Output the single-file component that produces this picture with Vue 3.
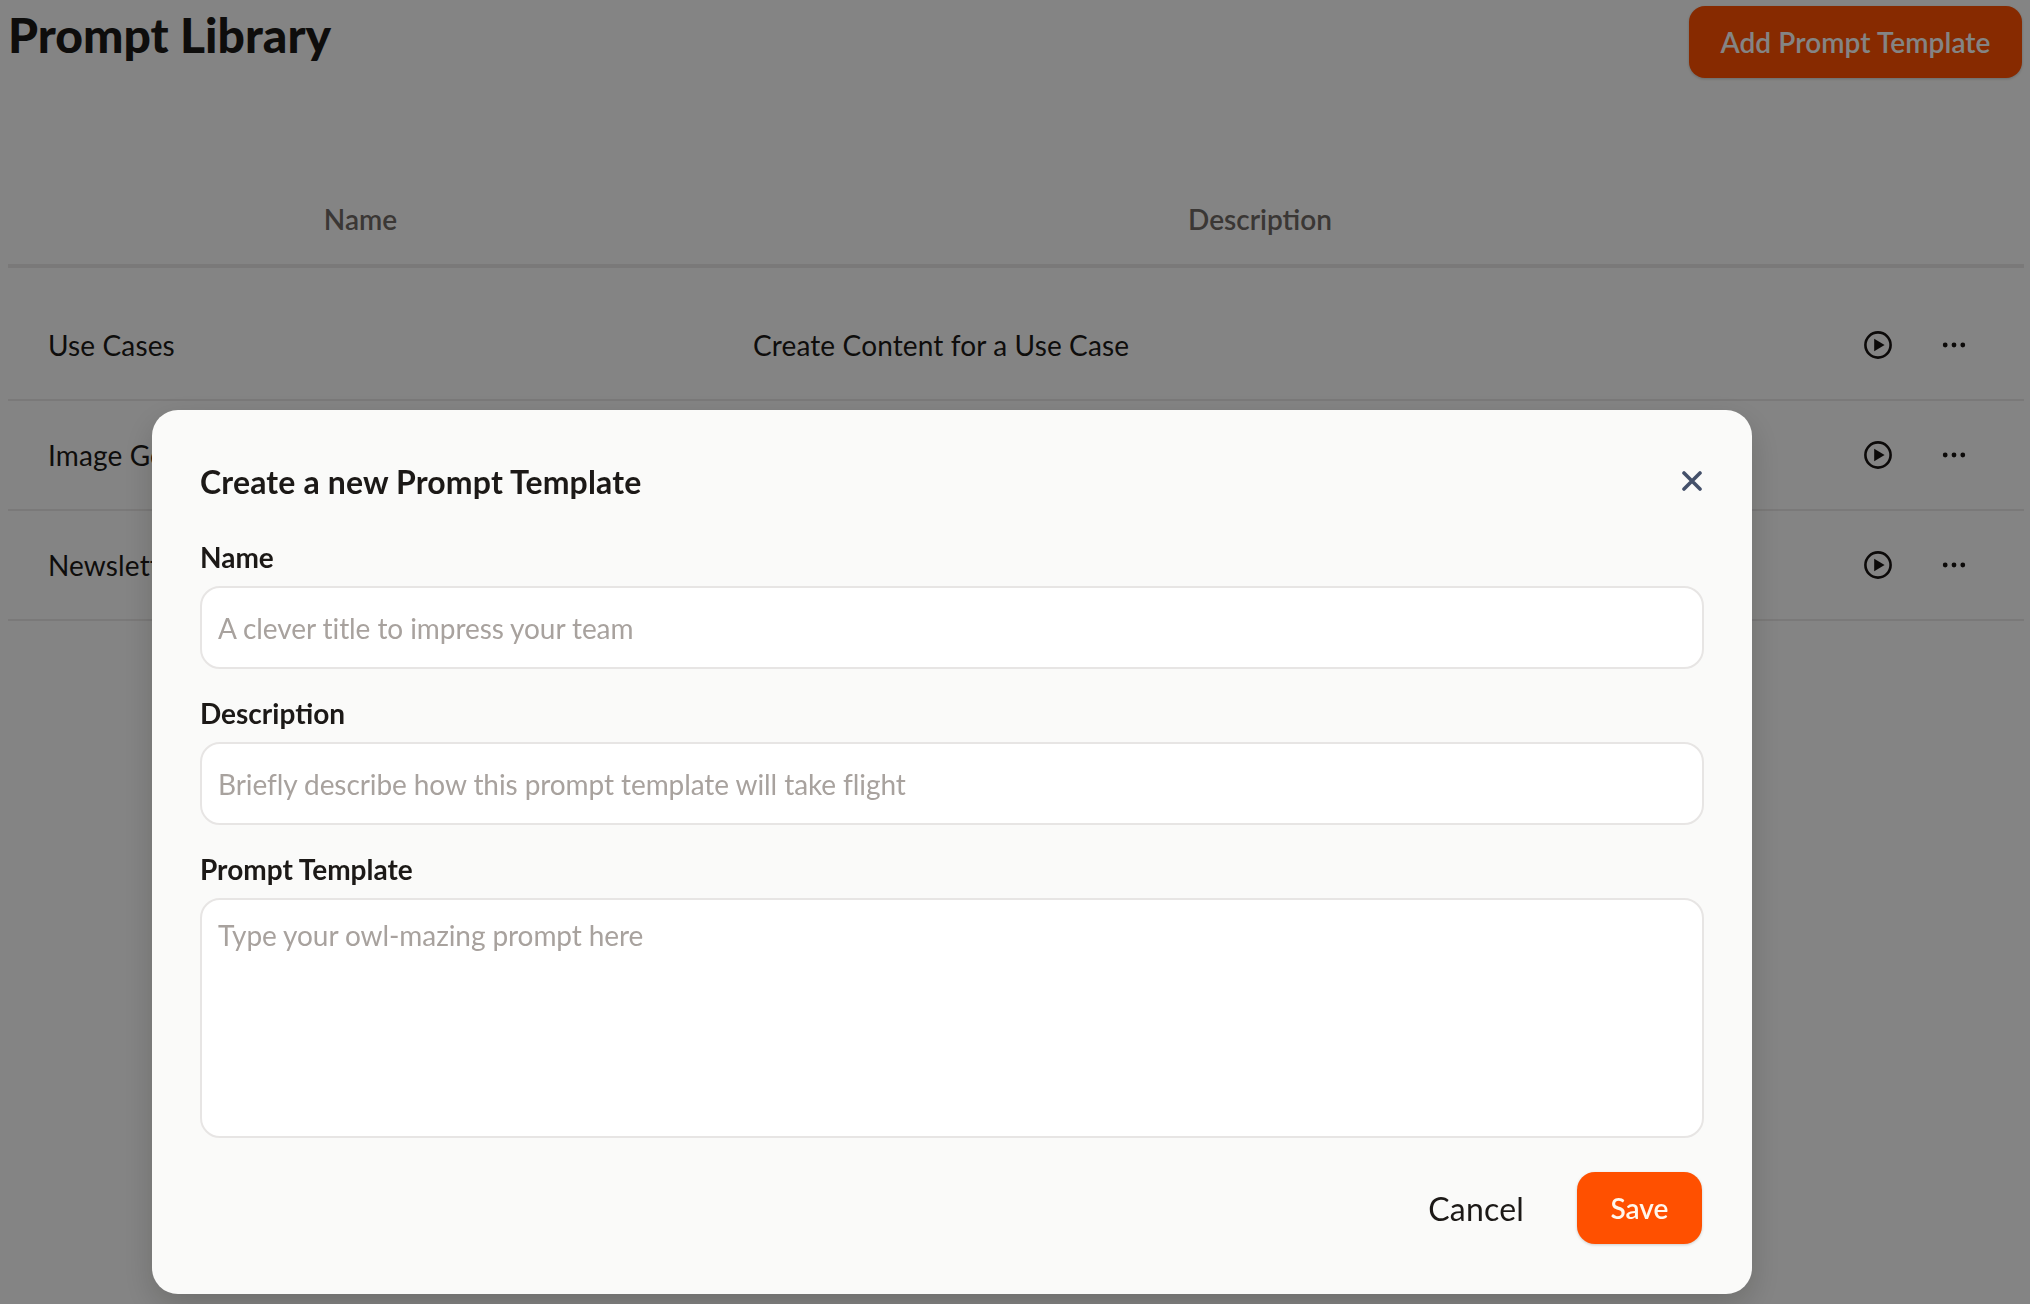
<template>
  <div class="page">
    <header class="page-head">
      <h1 class="page-title">Prompt Library</h1>
      <button class="add-btn">Add Prompt Template</button>
    </header>

    <div class="table">
      <div class="table-row table-row--head">
        <div class="cell-head">Name</div>
        <div class="cell-head">Description</div>
        <div></div>
      </div>
      <div v-for="row in rows" :key="row.name" class="table-row">
        <div class="cell cell--name">{{ row.name }}</div>
        <div class="cell cell--desc">{{ row.description }}</div>
        <div class="cell-actions">
          <svg class="play" viewBox="0 0 28 28" width="28" height="28" aria-hidden="true">
            <circle cx="14" cy="14" r="12.6" fill="none" stroke="#171312" stroke-width="2.6" />
            <path d="M10.2 7.8 L20.6 14 L10.2 20.2 Z" fill="#171312" />
          </svg>
          <svg class="dots" viewBox="0 0 24 6" width="24" height="6" aria-hidden="true">
            <circle cx="3.2" cy="3" r="2.4" fill="#171312" />
            <circle cx="12" cy="3" r="2.4" fill="#171312" />
            <circle cx="20.8" cy="3" r="2.4" fill="#171312" />
          </svg>
        </div>
      </div>
    </div>

    <div class="overlay">
      <div class="modal">
        <div class="modal-head">
          <h2 class="modal-title">Create a new Prompt Template</h2>
          <svg class="close" viewBox="0 0 20 20" width="20" height="20" aria-hidden="true">
            <path d="M2 2 L18 18 M18 2 L2 18" fill="none" stroke="#44506a" stroke-width="3.6" stroke-linecap="round" />
          </svg>
        </div>

        <label class="field-label">Name</label>
        <input class="field field--input" placeholder="A clever title to impress your team" />

        <label class="field-label">Description</label>
        <input class="field field--input" placeholder="Briefly describe how this prompt template will take flight" />

        <label class="field-label">Prompt Template</label>
        <textarea class="field field--area" placeholder="Type your owl-mazing prompt here"></textarea>

        <div class="modal-foot">
          <button class="cancel-btn">Cancel</button>
          <button class="save-btn">Save</button>
        </div>
      </div>
    </div>
  </div>
</template>

<script setup>
const rows = [
  { name: 'Use Cases', description: 'Create Content for a Use Case' },
  { name: 'Image Generation', description: 'Generate an image prompt' },
  { name: 'Newsletter', description: 'Draft a newsletter' }
];
</script>

<style>
html,
body {
  margin: 0;
  background: #fafaf9;
}
</style>

<style scoped>
.page {
  position: relative;
  height: 1304px;
  overflow: hidden;
  padding: 6px 6px 0 8px;
  box-sizing: border-box;
  font-family: Lato, "Liberation Sans", sans-serif;
  color: #1c1917;
}

.page-head {
  display: flex;
  justify-content: space-between;
  align-items: flex-start;
  padding-right: 2px;
}

.page-title {
  margin: 2px 0 0;
  font-size: 48px;
  line-height: 54px;
  font-weight: 900;
  color: #1c1917;
}

.add-btn {
  width: 333px;
  height: 72px;
  border: none;
  border-radius: 16px;
  background: #ff5000;
  color: #fafaf9;
  font: 600 28px Lato, sans-serif;
  letter-spacing: 0.1px;
  box-shadow: 0 1px 3px rgba(0, 0, 0, 0.2);
}

.table {
  margin-top: 108px;
}

.table-row {
  display: grid;
  grid-template-columns: 705px 1094px 1fr;
  align-items: center;
  height: 110px;
  border-bottom: 2px solid #e7e5e4;
  box-sizing: border-box;
}

.table-row--head {
  height: 82px;
  padding-bottom: 12px;
  border-bottom-width: 4px;
  margin-bottom: 23px;
}

.cell-head {
  text-align: center;
  font-size: 28px;
  font-weight: 600;
  color: #6f6864;
}

.cell {
  padding-left: 40px;
  font-size: 28px;
  letter-spacing: 0.13px;
  white-space: nowrap;
}

.cell-actions {
  display: flex;
  align-items: center;
  gap: 50px;
  padding-left: 57px;
}

.overlay {
  position: fixed;
  inset: 0;
  background: rgba(0, 0, 0, 0.47);
  padding: 410px 278px 10px 152px;
  box-sizing: border-box;
}

.modal {
  height: 884px;
  box-sizing: border-box;
  padding: 46px 48px 0;
  border-radius: 26px;
  background: #fafaf9;
  box-shadow: 0 12px 32px rgba(0, 0, 0, 0.18);
  display: flex;
  flex-direction: column;
}

.modal-head {
  display: flex;
  justify-content: space-between;
  align-items: center;
  height: 50px;
  margin-bottom: 33px;
}

.modal-title {
  margin: 0;
  font-size: 32px;
  letter-spacing: 0.15px;
  font-weight: 700;
  color: #1c1917;
}

.close {
  margin-right: 2px;
}

.field-label {
  display: block;
  font-size: 28px;
  line-height: 36px;
  font-weight: 700;
  margin-bottom: 11px;
  color: #1c1917;
}

.field {
  display: block;
  width: 100%;
  box-sizing: border-box;
  border: 2px solid #e7e5e4;
  border-radius: 20px;
  background: #fff;
  padding: 0 16px;
  font: 400 28px Lato, sans-serif;
  letter-spacing: -0.08px;
  color: #1c1917;
  outline: none;
  resize: none;
}

.field::placeholder {
  color: #a8a29e;
  opacity: 1;
}

.field--input {
  height: 83px;
  margin-bottom: 26px;
}

.field--area {
  height: 240px;
  padding-top: 18px;
  line-height: 34px;
}

.modal-foot {
  display: flex;
  justify-content: flex-end;
  align-items: center;
  margin-top: 34px;
  gap: 53px;
  padding-right: 2px;
}

.cancel-btn {
  border: none;
  background: none;
  padding: 0;
  font: 400 32px Lato, sans-serif;
  letter-spacing: 0.2px;
  color: #1c1917;
}

.save-btn {
  width: 125px;
  height: 72px;
  border: none;
  border-radius: 18px;
  background: #ff5000;
  color: #fff7ed;
  font: 600 28px Lato, sans-serif;
  box-shadow: 0 1px 3px rgba(0, 0, 0, 0.18);
}
</style>
